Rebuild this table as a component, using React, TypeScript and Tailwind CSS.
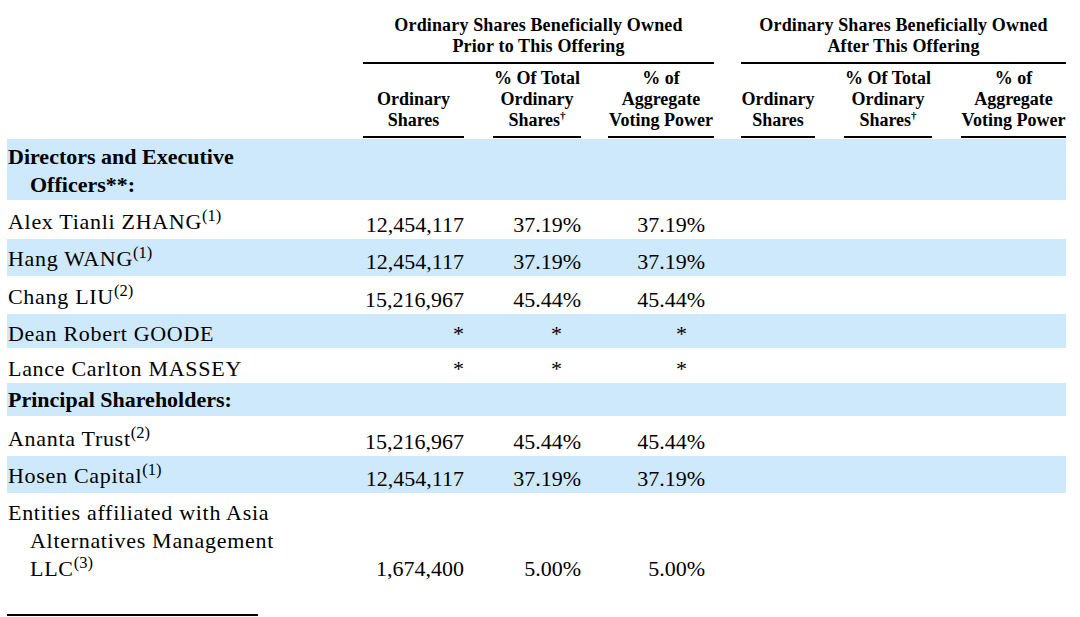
import React from "react";

const COLS =
  "grid grid-cols-[356px_101px_29px_88px_27px_106px_27px_74px_29px_88px_29px_105px]";

type Row = {
  lines: React.ReactNode[];
  bold?: boolean;
  blue?: boolean;
  h: string;
  namePb: string;
  vals?: [string, string, string];
  star?: boolean;
};

const Sup = ({ n }: { n: string }) => <sup className="tracking-normal">({n})</sup>;

const rows: Row[] = [
  {
    lines: ["Directors and Executive", "Officers**:"],
    bold: true,
    blue: true,
    h: "h-[61px]",
    namePb: "pb-[1px]",
  },
  {
    lines: [<>Alex Tianli ZHANG<Sup n="1" /></>],
    h: "h-[39px]",
    namePb: "pb-[3px]",
    vals: ["12,454,117", "37.19%", "37.19%"],
  },
  {
    lines: [<>Hang WANG<Sup n="1" /></>],
    blue: true,
    h: "h-[37px]",
    namePb: "pb-[3px]",
    vals: ["12,454,117", "37.19%", "37.19%"],
  },
  {
    lines: [<>Chang LIU<Sup n="2" /></>],
    h: "h-[38px]",
    namePb: "pb-[3px]",
    vals: ["15,216,967", "45.44%", "45.44%"],
  },
  {
    lines: ["Dean Robert GOODE"],
    blue: true,
    h: "h-[34px]",
    namePb: "pb-[0px]",
    star: true,
  },
  {
    lines: ["Lance Carlton MASSEY"],
    h: "h-[35px]",
    namePb: "pb-[0px]",
    star: true,
  },
  {
    lines: ["Principal Shareholders:"],
    bold: true,
    blue: true,
    h: "h-[33px]",
    namePb: "pb-[2px]",
  },
  {
    lines: [<>Ananta Trust<Sup n="2" /></>],
    h: "h-[40px]",
    namePb: "pb-[3px]",
    vals: ["15,216,967", "45.44%", "45.44%"],
  },
  {
    lines: [<>Hosen Capital<Sup n="1" /></>],
    blue: true,
    h: "h-[37px]",
    namePb: "pb-[3px]",
    vals: ["12,454,117", "37.19%", "37.19%"],
  },
  {
    lines: [
      "Entities affiliated with Asia",
      "Alternatives Management",
      <>LLC<Sup n="3" /></>,
    ],
    h: "h-[90px]",
    namePb: "pb-[0px]",
    vals: ["1,674,400", "5.00%", "5.00%"],
  },
];

const Dagger = () => (
  <span className="relative top-[-7px] text-[11px] leading-none">†</span>
);

export default function App() {
  return (
    <div className="w-[1080px] h-[617px] overflow-hidden bg-white text-black font-['Liberation_Serif','Times_New_Roman',serif]">
      <div className="ml-[7px] w-[1059px]">
        {/* group headers */}
        <div className={`${COLS} pt-[15px] text-[18px] leading-[21px] font-bold tracking-[0.15px]`}>
          <div className="col-start-2 col-span-5 text-center border-b-2 border-black pb-[5px]">
            Ordinary Shares Beneficially Owned
            <br />
            Prior to This Offering
          </div>
          <div className="col-start-8 col-span-5 text-center border-b-2 border-black pb-[5px]">
            Ordinary Shares Beneficially Owned
            <br />
            After This Offering
          </div>
        </div>
        {/* column headers */}
        <div className={`${COLS} items-end pt-[4px] text-[18px] leading-[21px] font-bold`}>
          {[0, 1].map((g) => (
            <React.Fragment key={g}>
              <div className={`${g === 0 ? "col-start-2" : "col-start-8"} text-center border-b-2 border-black pb-[5px]`}>
                Ordinary
                <br />
                Shares
              </div>
              <div className={`${g === 0 ? "col-start-4" : "col-start-10"} text-center border-b-2 border-black pb-[5px]`}>
                % Of Total
                <br />
                Ordinary
                <br />
                Shares
                <Dagger />
              </div>
              <div className={`${g === 0 ? "col-start-6" : "col-start-12"} text-center border-b-2 border-black pb-[5px] whitespace-nowrap`}>
                % of
                <br />
                Aggregate
                <br />
                Voting Power
              </div>
            </React.Fragment>
          ))}
        </div>
        {/* body */}
        <div className="mt-[1px] text-[22px] leading-[28px]">
          {rows.map((r, i) => (
            <div
              key={i}
              className={`${COLS} items-end ${r.h} ${r.blue ? "bg-[#cee9fb]" : "bg-white"}`}
            >
              <div
                className={`pl-[1px] whitespace-nowrap ${r.namePb} ${
                  r.bold ? "font-bold" : "tracking-[0.7px]"
                }`}
              >
                {r.lines.map((l, j) => (
                  <div key={j} className={j > 0 ? "pl-[22px]" : ""}>
                    {l}
                  </div>
                ))}
              </div>
              {r.vals && (
                <>
                  <div className="col-start-2 text-right">{r.vals[0]}</div>
                  <div className="col-start-4 text-right">{r.vals[1]}</div>
                  <div className="col-start-6 text-right pr-[9px]">{r.vals[2]}</div>
                </>
              )}
              {r.star && (
                <>
                  <div className="col-start-2 text-right">*</div>
                  <div className="col-start-4 text-right pr-[19px]">*</div>
                  <div className="col-start-6 text-right pr-[27px]">*</div>
                </>
              )}
            </div>
          ))}
        </div>
        <div className="mt-[31px] h-[2px] w-[251px] bg-black" />
      </div>
    </div>
  );
}
